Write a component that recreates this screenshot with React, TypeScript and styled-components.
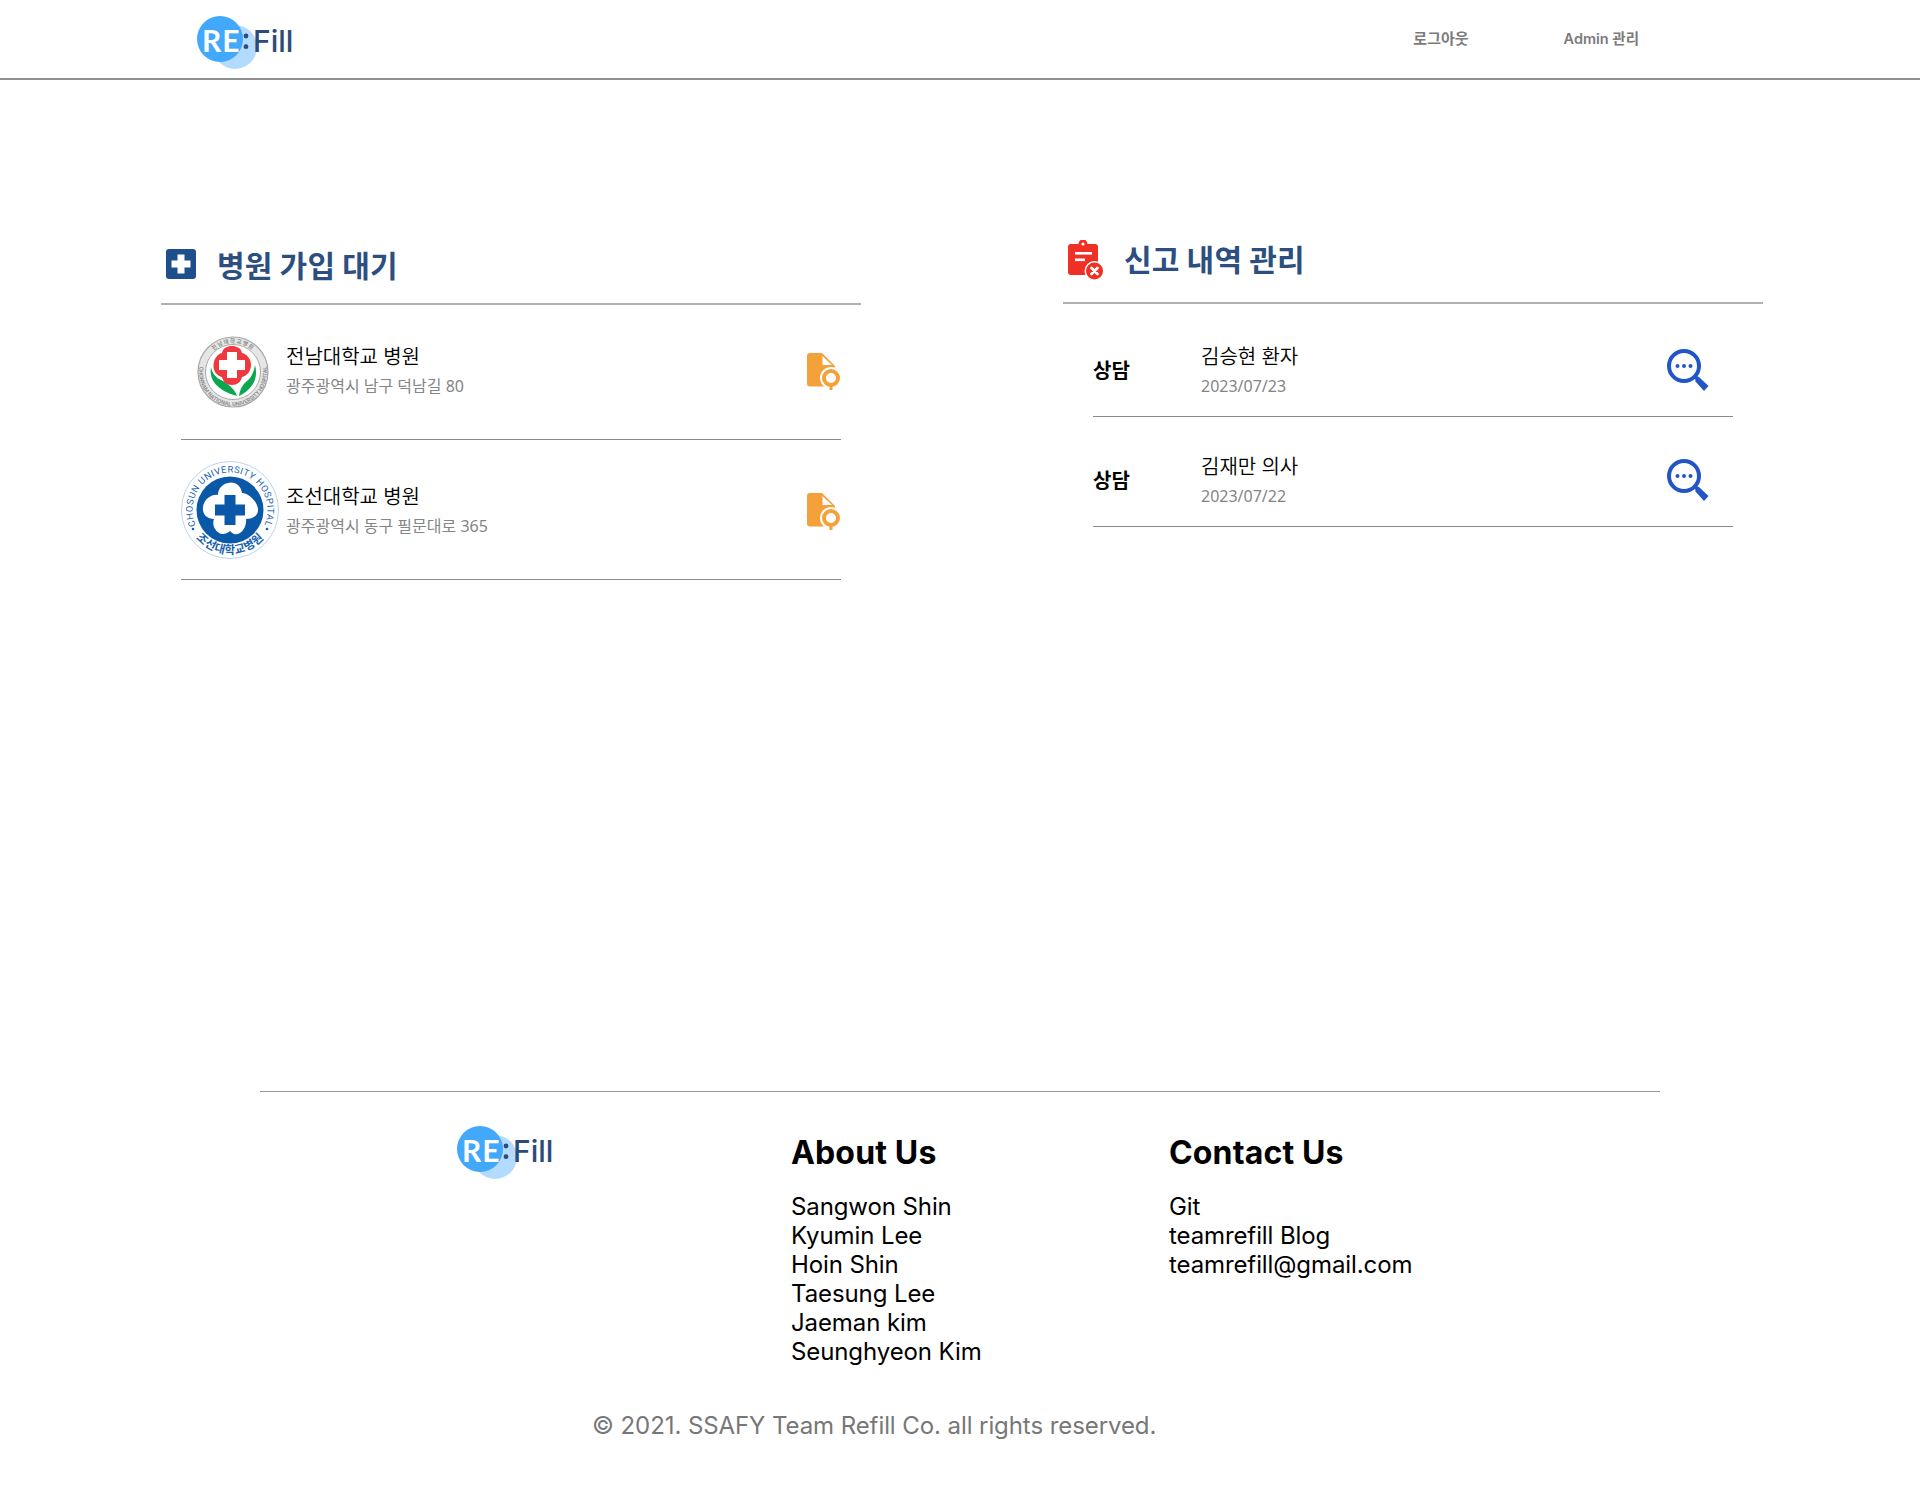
import React from "react";
import styled, { createGlobalStyle } from "styled-components";

const Global = createGlobalStyle`
  html, body { margin: 0; padding: 0; background: #fff; }
  body { font-family: "Noto Sans", "Noto Sans CJK KR", sans-serif; }
  * { box-sizing: border-box; }
`;

const Page = styled.div`
  width: 1920px;
  min-height: 1500px;
  display: flex;
  flex-direction: column;
`;

const Header = styled.header`
  height: 80px;
  border-bottom: 2px solid #909090;
  display: flex;
  align-items: flex-start;
  justify-content: space-between;
  padding: 14px 281px 0 196px;
`;

const Nav = styled.nav`
  display: flex;
  gap: 95px;
  padding-top: 14px;
`;

const NavLink = styled.a<{ $size: number }>`
  font-family: Inter, "Noto Sans CJK KR", sans-serif;
  font-size: ${(p) => p.$size}px;
  font-weight: 600;
  line-height: 22px;
  color: #7b7b7b;
`;

const Main = styled.main`
  height: 1011px;
  display: flex;
  gap: 202px;
  padding-left: 161px;
`;

const Panel = styled.section`
  width: 700px;
`;

const PanelHead = styled.div<{ $height: number; $gap: number; $pad: number }>`
  height: ${(p) => p.$height}px;
  border-bottom: 2px solid #b0b0b0;
  display: flex;
  align-items: flex-end;
  gap: ${(p) => p.$gap}px;
  padding-left: 5px;
  padding-bottom: ${(p) => p.$pad}px;
`;

const PanelIcon = styled.div<{ $bottom: number }>`
  display: flex;
  margin-bottom: ${(p) => p.$bottom}px;
`;

const PanelTitle = styled.h2`
  margin: 0;
  font-family: "Noto Sans CJK KR", sans-serif;
  font-size: 30px;
  line-height: 40px;
  font-weight: 700;
  letter-spacing: 0.2px;
  color: #2c4f7f;
`;

const HospitalList = styled.div`
  padding: 0 20px;
`;

const HospitalRow = styled.div<{ $height: number }>`
  height: ${(p) => p.$height}px;
  border-bottom: 1px solid #8a8a8a;
  display: flex;
  align-items: center;
`;

const LogoSlot = styled.div<{ $indent: number }>`
  width: 105px;
  flex-shrink: 0;
  display: flex;
  padding-left: ${(p) => p.$indent}px;
`;

const RowText = styled.div<{ $shift?: number }>`
  flex: 1;
  display: flex;
  flex-direction: column;
  gap: 1px;
  margin-top: ${(p) => p.$shift ?? 0}px;
`;

const RowName = styled.div`
  font-size: 20px;
  line-height: 30px;
  font-weight: 350;
  color: #000;
`;

const RowSub = styled.div`
  font-size: 16px;
  line-height: 26px;
  color: #858585;
`;

const ReportList = styled.div`
  padding: 3px 30px 0;
`;

const ReportRow = styled.div`
  height: 110px;
  padding-top: 18px;
  border-bottom: 1px solid #8a8a8a;
  display: flex;
  align-items: center;
`;

const ReportKind = styled.div`
  width: 108px;
  margin-top: -2px;
  font-family: "Noto Sans CJK KR", sans-serif;
  font-size: 20px;
  font-weight: 700;
  color: #000;
`;

const RowIcon = styled.div<{ $right: number; $top?: number }>`
  display: flex;
  margin-right: ${(p) => p.$right}px;
  margin-top: ${(p) => p.$top ?? 0}px;
`;

const Footer = styled.footer`
  width: 1400px;
  margin-left: 260px;
  border-top: 1px solid #999;
  font-family: Inter, sans-serif;
  color: #000;
`;

const FooterCols = styled.div`
  display: flex;
  padding: 32px 0 0 196px;
`;

const FooterLogo = styled.div`
  width: 335px;
`;

const FooterCol = styled.div<{ $width: number }>`
  width: ${(p) => p.$width}px;
  padding-top: 9px;
`;

const FooterHeading = styled.h3`
  margin: 0 0 19px;
  font-size: 32px;
  line-height: 40px;
  font-weight: 700;
  letter-spacing: 0.15px;
`;

const FooterItem = styled.div`
  font-size: 24px;
  line-height: 29px;
  letter-spacing: -0.1px;
`;

const Copyright = styled.div`
  margin: 45px 0 0 332px;
  font-size: 24px;
  line-height: 29px;
  letter-spacing: -0.08px;
  color: #777;
`;

const RefillLogo = () => (
  <svg width="100" height="56" viewBox="0 0 100 56">
    <circle cx="39" cy="33" r="22" fill="#b3dbff" />
    <circle cx="24" cy="25" r="23" fill="#42a8fb" />
    <text x="6" y="38" fontFamily="Lato, sans-serif" fontWeight="700" fontSize="30" letterSpacing="1" fill="#fff">RE</text>
    <circle cx="50" cy="22" r="2.400" fill="#2d4a78" />
    <circle cx="50" cy="32.700" r="2.400" fill="#2d4a78" />
    <text x="57" y="38" fontFamily="Inter, sans-serif" fontWeight="500" fontSize="30" fill="#2d4a78">Fill</text>
  </svg>
);

const PlusIcon = () => (
  <svg width="30" height="30" viewBox="0 0 30 30">
    <rect width="30" height="30" rx="3" fill="#1f4e8c" />
    <path d="M11.500 5.500h7v6h6v7h-6v6h-7v-6h-6v-7h6z" fill="#fff" />
  </svg>
);

const ReportIcon = () => (
  <svg width="36" height="40" viewBox="0 0 36 40">
    <path d="M3 4h7.500a4.500 4.500 0 0 1 9 0H27a3 3 0 0 1 3 3v25a3 3 0 0 1-3 3H3a3 3 0 0 1-3-3V7a3 3 0 0 1 3-3z" fill="#ee3124" />
    <circle cx="15" cy="4" r="1.600" fill="#fff" />
    <rect x="7" y="12" width="17" height="2.600" fill="#fff" />
    <rect x="7" y="18.500" width="10" height="2.600" fill="#fff" />
    <circle cx="26.500" cy="31" r="10" fill="#fff" />
    <circle cx="26.500" cy="31" r="8.500" fill="#ee3124" />
    <path d="M23.500 28l6 6M29.500 28l-6 6" stroke="#fff" strokeWidth="2.800" strokeLinecap="round" />
  </svg>
);

const DocSearchIcon = () => (
  <svg width="34" height="38" viewBox="0 0 34 38">
    <path d="M3 0h12l13 13v20.500H3a3 3 0 0 1-3-3V3a3 3 0 0 1 3-3z" fill="#f4a13a" />
    <path d="M15 2v10.500h11z" fill="#fff" stroke="#f4a13a" strokeWidth="1" />
    <circle cx="24" cy="25" r="11" fill="#fff" />
    <circle cx="24" cy="25" r="7" fill="#fff" stroke="#f4a13a" strokeWidth="4" />
    <rect x="22.500" y="32" width="3" height="5" fill="#f4a13a" />
  </svg>
);

const MagnifierIcon = () => (
  <svg width="42" height="42" viewBox="0 0 42 42">
    <circle cx="17" cy="17" r="15" fill="none" stroke="#2255c8" strokeWidth="4" />
    <circle cx="10.500" cy="17" r="2" fill="#2255c8" />
    <circle cx="17" cy="17" r="2" fill="#2255c8" />
    <circle cx="23.500" cy="17" r="2" fill="#2255c8" />
    <path d="M28 29l2-2 2.500 1.500 9 8.500-4.500 5-8.500-9.500z" fill="#2255c8" />
  </svg>
);

const ChonnamLogo = () => (
  <svg width="72" height="72" viewBox="0 0 72 72">
    <defs>
      <path id="cn-bottom" d="M36 2a34 34 0 1 0 .1 0" />
      <path id="cn-top" d="M36 65a29 29 0 1 1 .1 0" />
    </defs>
    <circle cx="36" cy="36" r="35" fill="#e6e6e6" stroke="#a8a8a8" strokeWidth="1.200" />
    <circle cx="36" cy="36" r="27.500" fill="#fff" stroke="#a8a8a8" strokeWidth="1" />
    <text fontFamily="Roboto, sans-serif" fontSize="5.600" fontWeight="700" fill="#8e8e8e">
      <textPath href="#cn-bottom" startOffset="50%" textAnchor="middle">CHONNAM NATIONAL UNIVERSITY HOSPITAL</textPath>
    </text>
    <text fontFamily="'Noto Sans CJK KR', sans-serif" fontSize="5.500" fontWeight="700" fill="#8e8e8e" letterSpacing="1">
      <textPath href="#cn-top" startOffset="50%" textAnchor="middle">전남대학교병원</textPath>
    </text>
    <path d="M14 31c-2 11 4 23 26 29-2-7-10-13-16-16-5-2-9-7-10-13z" fill="#0aa650" />
    <path d="M58 29c3 11 0 23-16 31 1-7 4-12 8-15 4-3 7-9 8-16z" fill="#0aa650" />
    <path d="M35 10c5 0 9 2 10 7 5 1 9 6 9 12s-4 11-9 12c-1 5-5 8-10 8s-9-3-10-8c-5-1-9-6-8.500-12 .5-6 3.500-11 8.500-12 1-5 5-7 10-7z" fill="#ee3a3f" />
    <path d="M30 16h10v8h8v10h-8v8H30v-8h-8V24h8z" fill="#fff" />
  </svg>
);

const ChosunLogo = () => (
  <svg width="98" height="98" viewBox="0 0 98 98">
    <defs>
      <path id="cs-top" d="M49 86.500a37.500 37.500 0 1 1 .1 0" />
      <path id="cs-bottom" d="M5 49a44 44 0 0 0 88 0" />
    </defs>
    <circle cx="49" cy="49" r="48.500" fill="#fff" stroke="#bcd4ee" strokeWidth="1" />
    <text fontFamily="Roboto, sans-serif" fontSize="9.300" fill="#1a5fb0" letterSpacing="0.500">
      <textPath href="#cs-top" startOffset="50%" textAnchor="middle">CHOSUN UNIVERSITY HOSPITAL</textPath>
    </text>
    <text fontFamily="'Noto Sans CJK KR', sans-serif" fontSize="11.500" fontWeight="700" fill="#1a5fb0" letterSpacing="0.500">
      <textPath href="#cs-bottom" startOffset="50%" textAnchor="middle">조선대학교병원</textPath>
    </text>
    <circle cx="12" cy="68" r="1.300" fill="#1a5fb0" />
    <circle cx="86" cy="68" r="1.300" fill="#1a5fb0" />
    <circle cx="49" cy="49" r="33.500" fill="#0a59a8" />
    <path d="M47 22c6-2 13 2 14 10 7 0 17 10 16 18-1 6-7 8-12 8 1 8-5 17-12 15-2-1-3-2-4-3-3 3-8 4-11 2-5-3-7-9-5-14-7 0-12-5-11-12 1-8 9-13 15-12 0-6 4-11 10-12z" fill="#fff" />
    <path d="M43.500 34h11v9.500H64v11h-9.500V64h-11v-9.500H34v-11h9.500z" fill="#0a59a8" />
  </svg>
);

const hospitals = [
  { name: "전남대학교 병원", addr: "광주광역시 남구 덕남길 80", logo: <ChonnamLogo />, height: 135, indent: 16, shift: -3, top: 0 },
  { name: "조선대학교 병원", addr: "광주광역시 동구 필문대로 365", logo: <ChosunLogo />, height: 140, indent: 0, shift: 2, top: 4 },
];

const reports = [
  { name: "김승현 환자", date: "2023/07/23" },
  { name: "김재만 의사", date: "2023/07/22" },
];

const members = ["Sangwon Shin", "Kyumin Lee", "Hoin Shin", "Taesung Lee", "Jaeman kim", "Seunghyeon Kim"];
const contacts = ["Git", "teamrefill Blog", "teamrefill@gmail.com"];

export default function App() {
  return (
    <Page>
      <Global />
      <Header>
        <RefillLogo />
        <Nav>
          <NavLink $size={15}>로그아웃</NavLink>
          <NavLink $size={14.5}>Admin 관리</NavLink>
        </Nav>
      </Header>
      <Main>
        <Panel>
          <PanelHead $height={225} $gap={21} $pad={19}>
            <PanelIcon $bottom={5}>
              <PlusIcon />
            </PanelIcon>
            <PanelTitle>병원 가입 대기</PanelTitle>
          </PanelHead>
          <HospitalList>
            {hospitals.map((h) => (
              <HospitalRow key={h.name} $height={h.height}>
                <LogoSlot $indent={h.indent}>{h.logo}</LogoSlot>
                <RowText $shift={h.shift}>
                  <RowName>{h.name}</RowName>
                  <RowSub>{h.addr}</RowSub>
                </RowText>
                <RowIcon $right={0} $top={h.top}>
                  <DocSearchIcon />
                </RowIcon>
              </HospitalRow>
            ))}
          </HospitalList>
        </Panel>
        <Panel>
          <PanelHead $height={224} $gap={20} $pad={24}>
            <PanelIcon $bottom={-2}>
              <ReportIcon />
            </PanelIcon>
            <PanelTitle>신고 내역 관리</PanelTitle>
          </PanelHead>
          <ReportList>
            {reports.map((r) => (
              <ReportRow key={r.name}>
                <ReportKind>상담</ReportKind>
                <RowText>
                  <RowName>{r.name}</RowName>
                  <RowSub>{r.date}</RowSub>
                </RowText>
                <RowIcon $right={24} $top={-2}>
                  <MagnifierIcon />
                </RowIcon>
              </ReportRow>
            ))}
          </ReportList>
        </Panel>
      </Main>
      <Footer>
        <FooterCols>
          <FooterLogo>
            <RefillLogo />
          </FooterLogo>
          <FooterCol $width={378}>
            <FooterHeading>About Us</FooterHeading>
            {members.map((m) => (
              <FooterItem key={m}>{m}</FooterItem>
            ))}
          </FooterCol>
          <FooterCol $width={400}>
            <FooterHeading>Contact Us</FooterHeading>
            {contacts.map((c) => (
              <FooterItem key={c}>{c}</FooterItem>
            ))}
          </FooterCol>
        </FooterCols>
        <Copyright>© 2021. SSAFY Team Refill Co. all rights reserved.</Copyright>
      </Footer>
    </Page>
  );
}
